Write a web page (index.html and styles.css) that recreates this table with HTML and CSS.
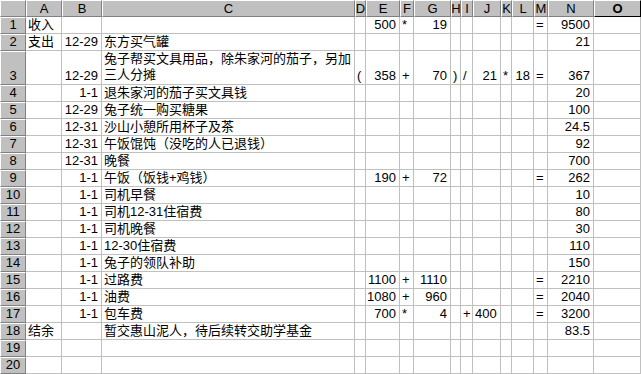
FILE: index.html
```html
<!DOCTYPE html>
<html lang="zh-CN">
<head>
<meta charset="utf-8">
<title>Sheet</title>
<link rel="stylesheet" href="styles.css">
</head>
<body>
<div class="sheet">
  <div class="row hdr">
    <div class="ch corner"></div>
    <div class="ch">A</div><div class="ch">B</div><div class="ch">C</div><div class="ch">D</div><div class="ch">E</div><div class="ch">F</div><div class="ch">G</div><div class="ch">H</div><div class="ch">I</div><div class="ch">J</div><div class="ch">K</div><div class="ch">L</div><div class="ch">M</div><div class="ch">N</div><div class="ch sel">O</div>
  </div>
  <div class="row">
    <div class="rh">1</div>
    <div class="c">收入</div><div class="c"></div><div class="c"></div><div class="c"></div><div class="c r">500</div><div class="c">*</div><div class="c r">19</div><div class="c"></div><div class="c"></div><div class="c"></div><div class="c"></div><div class="c"></div><div class="c">=</div><div class="c r">9500</div><div class="c"></div>
  </div>
  <div class="row">
    <div class="rh">2</div>
    <div class="c">支出</div><div class="c r">12-29</div><div class="c">东方买气罐</div><div class="c"></div><div class="c"></div><div class="c"></div><div class="c"></div><div class="c"></div><div class="c"></div><div class="c"></div><div class="c"></div><div class="c"></div><div class="c"></div><div class="c r">21</div><div class="c"></div>
  </div>
  <div class="row tall">
    <div class="rh">3</div>
    <div class="c"></div><div class="c r">12-29</div><div class="c wrap">兔子帮买文具用品，除朱家河的茄子，另加<br>三人分摊</div><div class="c">(</div><div class="c r">358</div><div class="c">+</div><div class="c r">70</div><div class="c">)</div><div class="c">/</div><div class="c r">21</div><div class="c">*</div><div class="c r">18</div><div class="c">=</div><div class="c r">367</div><div class="c"></div>
  </div>
  <div class="row">
    <div class="rh">4</div>
    <div class="c"></div><div class="c r">1-1</div><div class="c">退朱家河的茄子买文具钱</div><div class="c"></div><div class="c"></div><div class="c"></div><div class="c"></div><div class="c"></div><div class="c"></div><div class="c"></div><div class="c"></div><div class="c"></div><div class="c"></div><div class="c r">20</div><div class="c"></div>
  </div>
  <div class="row">
    <div class="rh">5</div>
    <div class="c"></div><div class="c r">12-29</div><div class="c">兔子统一购买糖果</div><div class="c"></div><div class="c"></div><div class="c"></div><div class="c"></div><div class="c"></div><div class="c"></div><div class="c"></div><div class="c"></div><div class="c"></div><div class="c"></div><div class="c r">100</div><div class="c"></div>
  </div>
  <div class="row">
    <div class="rh">6</div>
    <div class="c"></div><div class="c r">12-31</div><div class="c">沙山小憩所用杯子及茶</div><div class="c"></div><div class="c"></div><div class="c"></div><div class="c"></div><div class="c"></div><div class="c"></div><div class="c"></div><div class="c"></div><div class="c"></div><div class="c"></div><div class="c r">24.5</div><div class="c"></div>
  </div>
  <div class="row">
    <div class="rh">7</div>
    <div class="c"></div><div class="c r">12-31</div><div class="c">午饭馄饨（没吃的人已退钱）</div><div class="c"></div><div class="c"></div><div class="c"></div><div class="c"></div><div class="c"></div><div class="c"></div><div class="c"></div><div class="c"></div><div class="c"></div><div class="c"></div><div class="c r">92</div><div class="c"></div>
  </div>
  <div class="row">
    <div class="rh">8</div>
    <div class="c"></div><div class="c r">12-31</div><div class="c">晚餐</div><div class="c"></div><div class="c"></div><div class="c"></div><div class="c"></div><div class="c"></div><div class="c"></div><div class="c"></div><div class="c"></div><div class="c"></div><div class="c"></div><div class="c r">700</div><div class="c"></div>
  </div>
  <div class="row">
    <div class="rh">9</div>
    <div class="c"></div><div class="c r">1-1</div><div class="c">午饭（饭钱+鸡钱）</div><div class="c"></div><div class="c r">190</div><div class="c">+</div><div class="c r">72</div><div class="c"></div><div class="c"></div><div class="c"></div><div class="c"></div><div class="c"></div><div class="c">=</div><div class="c r">262</div><div class="c"></div>
  </div>
  <div class="row">
    <div class="rh">10</div>
    <div class="c"></div><div class="c r">1-1</div><div class="c">司机早餐</div><div class="c"></div><div class="c"></div><div class="c"></div><div class="c"></div><div class="c"></div><div class="c"></div><div class="c"></div><div class="c"></div><div class="c"></div><div class="c"></div><div class="c r">10</div><div class="c"></div>
  </div>
  <div class="row">
    <div class="rh">11</div>
    <div class="c"></div><div class="c r">1-1</div><div class="c">司机12-31住宿费</div><div class="c"></div><div class="c"></div><div class="c"></div><div class="c"></div><div class="c"></div><div class="c"></div><div class="c"></div><div class="c"></div><div class="c"></div><div class="c"></div><div class="c r">80</div><div class="c"></div>
  </div>
  <div class="row">
    <div class="rh">12</div>
    <div class="c"></div><div class="c r">1-1</div><div class="c">司机晚餐</div><div class="c"></div><div class="c"></div><div class="c"></div><div class="c"></div><div class="c"></div><div class="c"></div><div class="c"></div><div class="c"></div><div class="c"></div><div class="c"></div><div class="c r">30</div><div class="c"></div>
  </div>
  <div class="row">
    <div class="rh">13</div>
    <div class="c"></div><div class="c r">1-1</div><div class="c">12-30住宿费</div><div class="c"></div><div class="c"></div><div class="c"></div><div class="c"></div><div class="c"></div><div class="c"></div><div class="c"></div><div class="c"></div><div class="c"></div><div class="c"></div><div class="c r">110</div><div class="c"></div>
  </div>
  <div class="row">
    <div class="rh">14</div>
    <div class="c"></div><div class="c r">1-1</div><div class="c">兔子的领队补助</div><div class="c"></div><div class="c"></div><div class="c"></div><div class="c"></div><div class="c"></div><div class="c"></div><div class="c"></div><div class="c"></div><div class="c"></div><div class="c"></div><div class="c r">150</div><div class="c"></div>
  </div>
  <div class="row">
    <div class="rh">15</div>
    <div class="c"></div><div class="c r">1-1</div><div class="c">过路费</div><div class="c"></div><div class="c r">1100</div><div class="c">+</div><div class="c r">1110</div><div class="c"></div><div class="c"></div><div class="c"></div><div class="c"></div><div class="c"></div><div class="c">=</div><div class="c r">2210</div><div class="c"></div>
  </div>
  <div class="row">
    <div class="rh">16</div>
    <div class="c"></div><div class="c r">1-1</div><div class="c">油费</div><div class="c"></div><div class="c r">1080</div><div class="c">+</div><div class="c r">960</div><div class="c"></div><div class="c"></div><div class="c"></div><div class="c"></div><div class="c"></div><div class="c">=</div><div class="c r">2040</div><div class="c"></div>
  </div>
  <div class="row">
    <div class="rh">17</div>
    <div class="c"></div><div class="c r">1-1</div><div class="c">包车费</div><div class="c"></div><div class="c r">700</div><div class="c">*</div><div class="c r">4</div><div class="c"></div><div class="c">+</div><div class="c">400</div><div class="c"></div><div class="c"></div><div class="c">=</div><div class="c r">3200</div><div class="c"></div>
  </div>
  <div class="row">
    <div class="rh">18</div>
    <div class="c">结余</div><div class="c"></div><div class="c">暂交惠山泥人，待后续转交助学基金</div><div class="c"></div><div class="c"></div><div class="c"></div><div class="c"></div><div class="c"></div><div class="c"></div><div class="c"></div><div class="c"></div><div class="c"></div><div class="c"></div><div class="c r">83.5</div><div class="c"></div>
  </div>
  <div class="row">
    <div class="rh">19</div>
    <div class="c"></div><div class="c"></div><div class="c"></div><div class="c"></div><div class="c"></div><div class="c"></div><div class="c"></div><div class="c"></div><div class="c"></div><div class="c"></div><div class="c"></div><div class="c"></div><div class="c"></div><div class="c"></div><div class="c"></div>
  </div>
  <div class="row">
    <div class="rh">20</div>
    <div class="c"></div><div class="c"></div><div class="c"></div><div class="c"></div><div class="c"></div><div class="c"></div><div class="c"></div><div class="c"></div><div class="c"></div><div class="c"></div><div class="c"></div><div class="c"></div><div class="c"></div><div class="c"></div><div class="c"></div>
  </div>
</div>
</body>
</html>
```
FILE: styles.css
```css
html, body {
  margin: 0;
  padding: 0;
  background: #ffffff;
}

.sheet {
  width: 641px;
  height: 374px;
  overflow: hidden;
  font-family: "Liberation Sans", "Noto Sans CJK SC", sans-serif;
  font-size: 13px;
  color: #000;
}

.row {
  display: grid;
  grid-template-columns: 26px 36px 40px 253px 11px 34px 14px 37px 10px 12px 28px 11px 22px 14px 46px 47px;
  height: 17px;
}

.row.tall {
  height: 34px;
}

.c, .rh, .ch {
  box-sizing: border-box;
  overflow: hidden;
  white-space: nowrap;
  line-height: 15px;
}

.c {
  display: flex;
  align-items: flex-end;
  padding: 0 2px 1px 2px;
  border-right: 1px solid #c0c0c0;
  border-bottom: 1px solid #c0c0c0;
}

.c.r {
  justify-content: flex-end;
  padding-right: 3px;
}

.c.wrap {
  white-space: normal;
  line-height: 16px;
}

.rh {
  display: flex;
  align-items: flex-end;
  justify-content: center;
  padding-bottom: 1px;
  background: #c0c0c0;
  border-top: 1px solid #ffffff;
  border-left: 1px solid #ffffff;
  border-right: 1px solid #808080;
  border-bottom: 1px solid #808080;
}

.ch {
  display: flex;
  align-items: center;
  justify-content: center;
  background: #c0c0c0;
  border-top: 1px solid #ffffff;
  border-left: 1px solid #ffffff;
  border-right: 1px solid #808080;
  border-bottom: 1px solid #808080;
}

.ch.sel {
  font-weight: bold;
  border-right-color: #000000;
  border-bottom-color: #000000;
}
```
